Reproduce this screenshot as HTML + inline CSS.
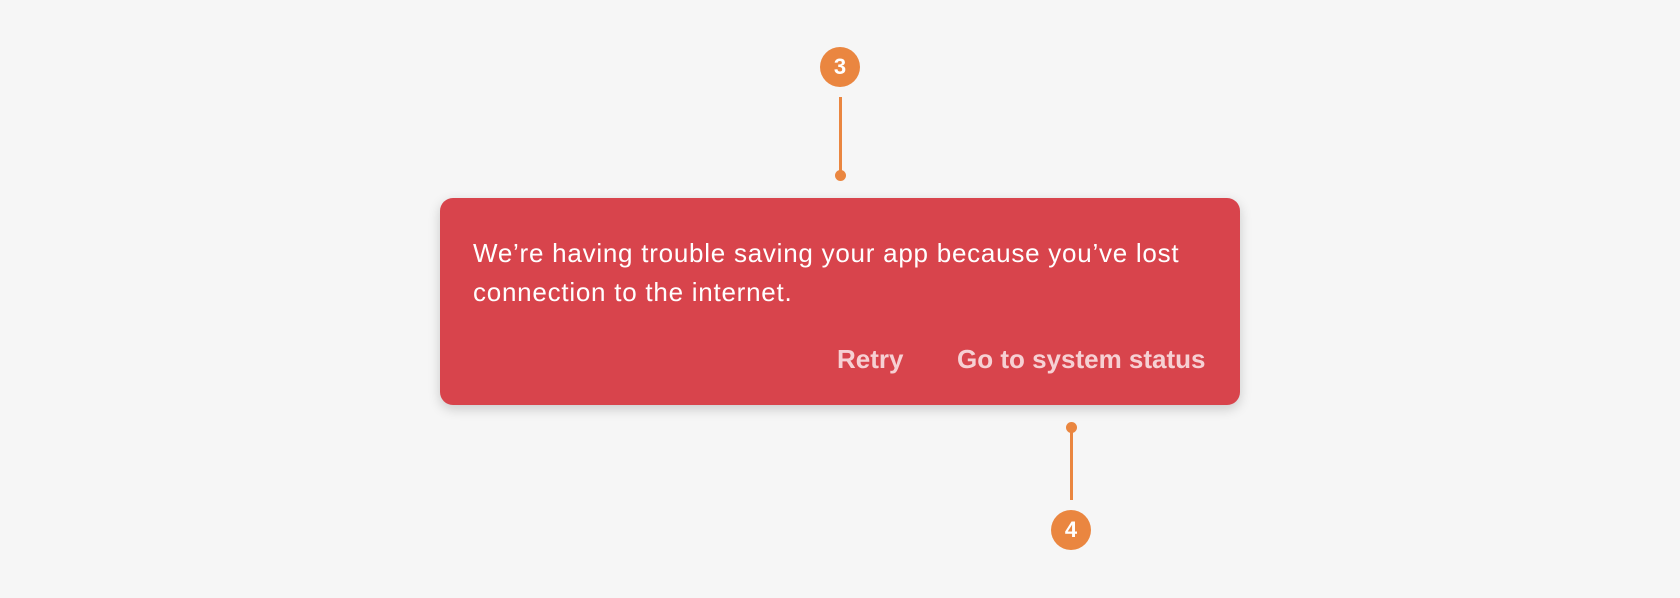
<!DOCTYPE html>
<html><head><style>
html,body{margin:0;width:1680px;height:598px;background:#f6f6f6;overflow:hidden;font-family:"Liberation Sans",sans-serif;position:relative}
.card{position:absolute;left:440px;top:198px;width:800px;height:207px;background:#d8444c;border-radius:13px;box-shadow:0 4px 12px rgba(0,0,0,0.18)}
.msg{position:absolute;left:33px;top:36px;width:740px;color:#fff;font-size:26px;line-height:39px;letter-spacing:0.75px}
.btn{position:absolute;top:146px;color:#f6d0d3;font-size:26px;font-weight:bold;line-height:30px}
.badge{position:absolute;width:40px;height:40px;border-radius:50%;background:#ea8640;color:#fff;font-weight:bold;font-size:22px;text-align:center;line-height:40px}
.line{position:absolute;width:3px;background:#ea8640}
.dot{position:absolute;width:11px;height:11px;border-radius:50%;background:#ea8640}
</style></head><body>
<div class="badge" style="left:820px;top:47px">3</div>
<div class="line" style="left:839px;top:97px;height:78px"></div>
<div class="dot" style="left:835px;top:170px"></div>
<div class="card">
<div class="msg">We’re having trouble saving your app because you’ve lost connection to the internet.</div>
<div class="btn" style="left:397px">Retry</div>
<div class="btn" style="left:517px">Go to system status</div>
</div>
<div class="dot" style="left:1066px;top:422px"></div>
<div class="line" style="left:1070px;top:427px;height:73px"></div>
<div class="badge" style="left:1051px;top:510px">4</div>
</body></html>
